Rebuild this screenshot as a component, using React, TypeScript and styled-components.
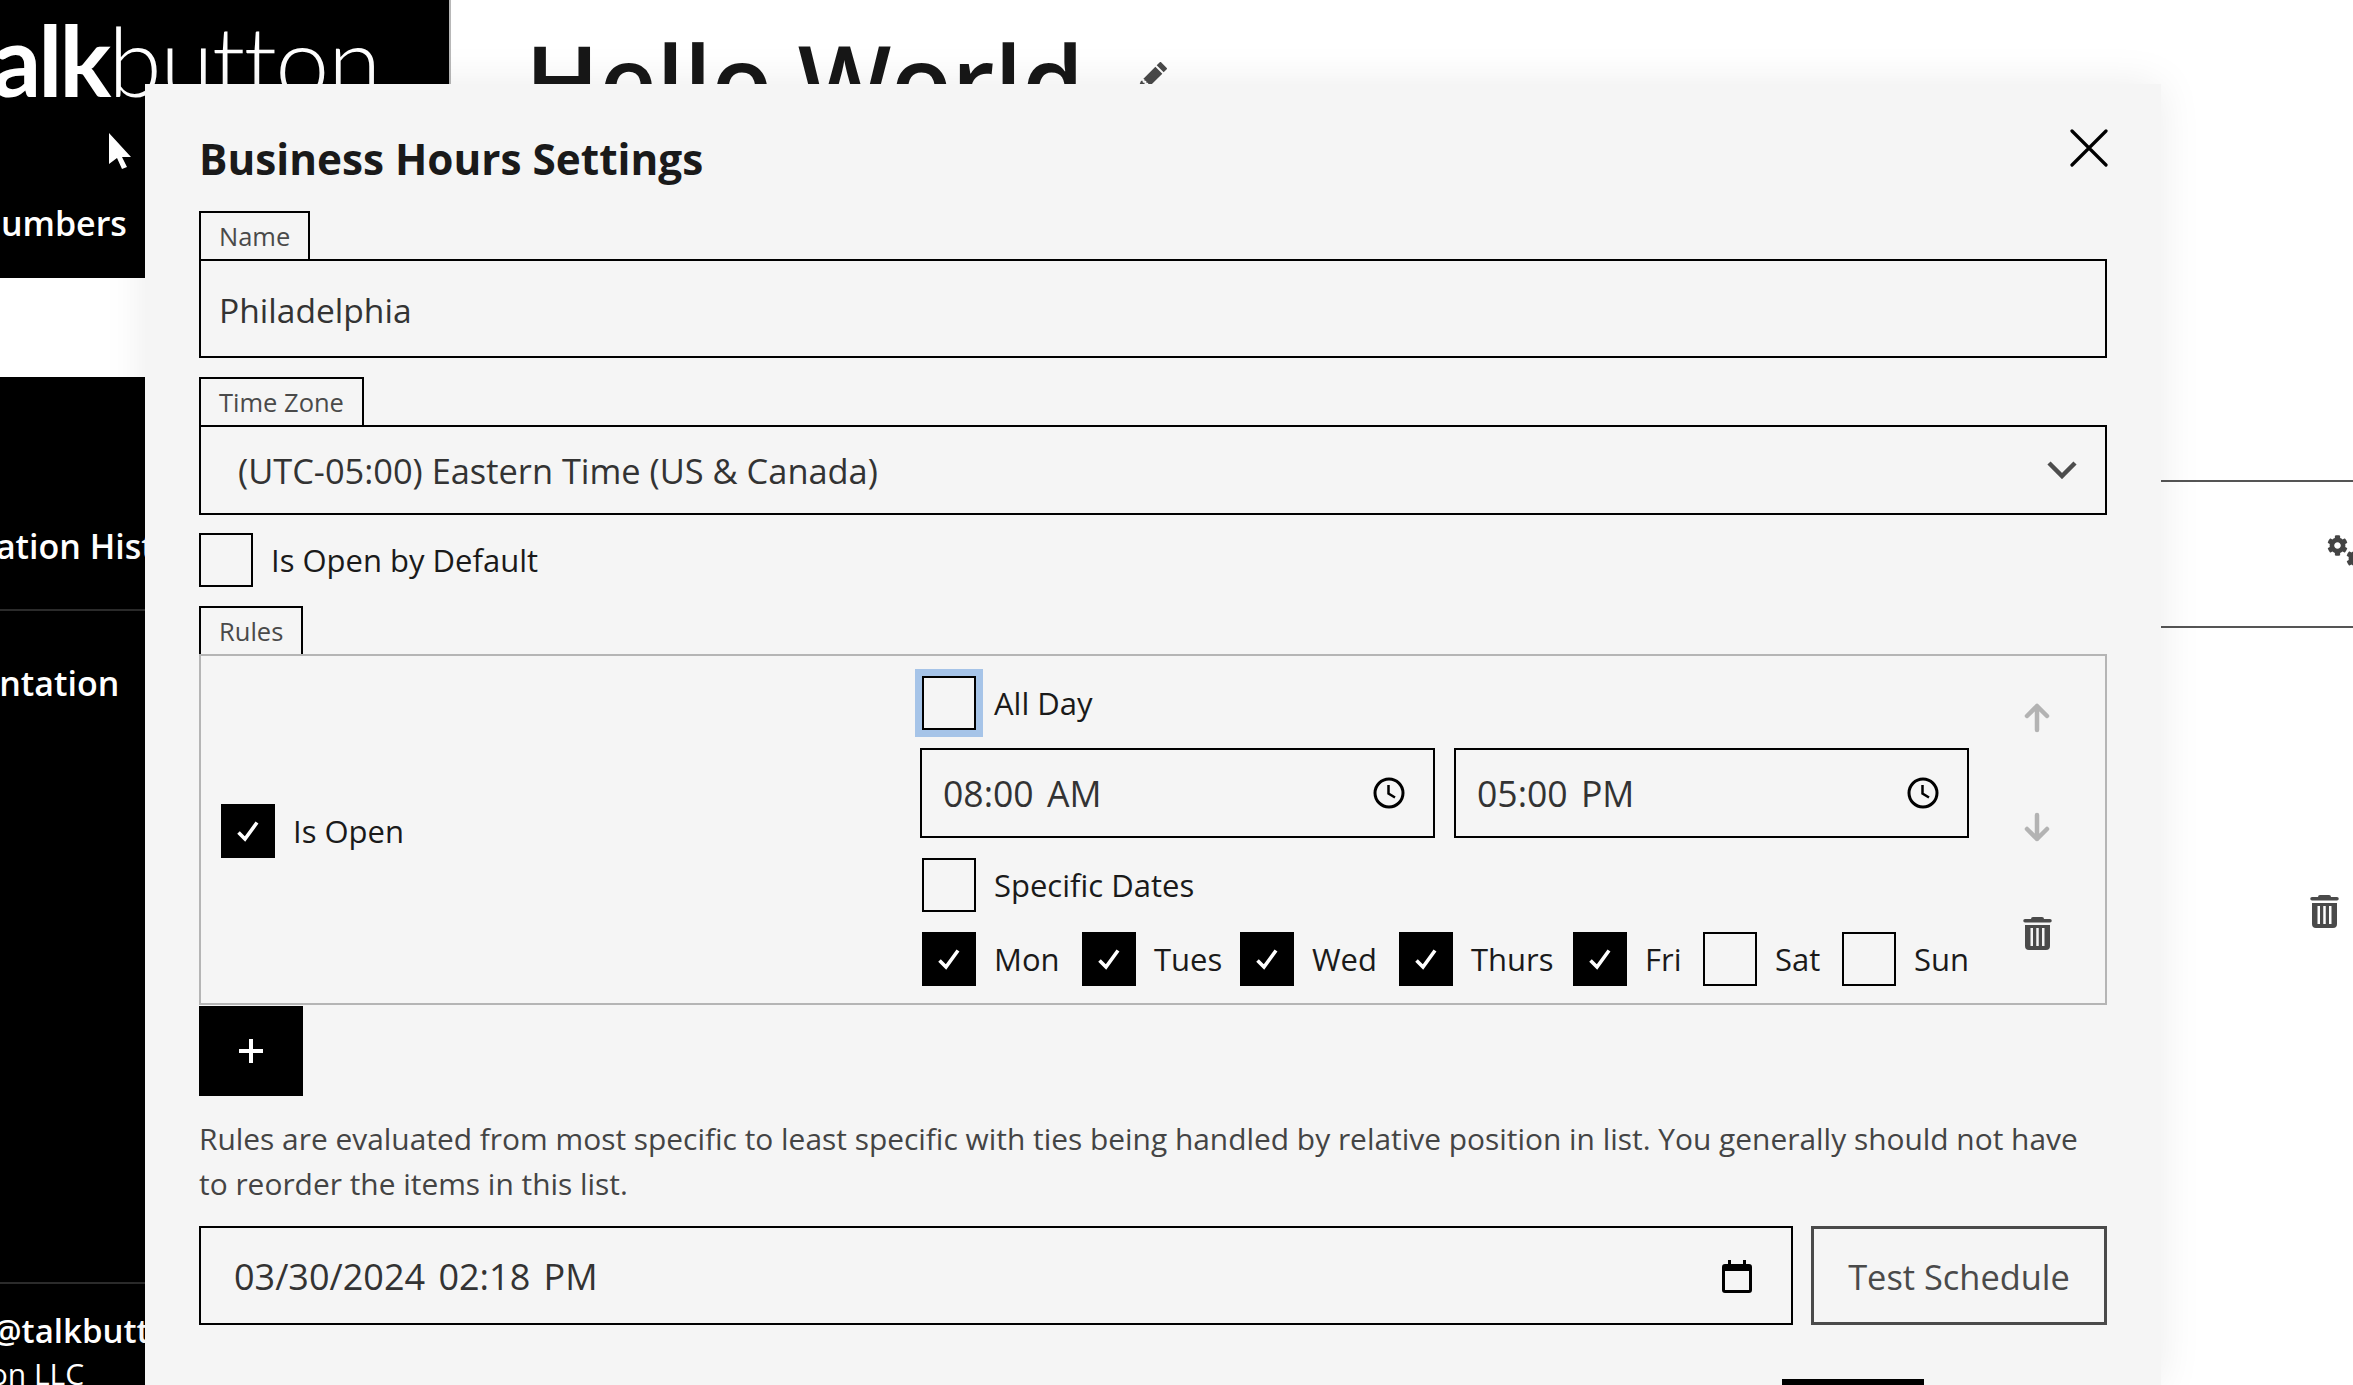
import styled, { createGlobalStyle } from 'styled-components';
import { BsPencilFill } from 'react-icons/bs';
import { FaCog } from 'react-icons/fa';

const FONT = '"Open Sans", "Noto Sans", "Liberation Sans", sans-serif';
const DAYS = [
  { name: 'Mon', checked: true, width: 160 },
  { name: 'Tues', checked: true, width: 158 },
  { name: 'Wed', checked: true, width: 159 },
  { name: 'Thurs', checked: true, width: 174 },
  { name: 'Fri', checked: true, width: 130 },
  { name: 'Sat', checked: false, width: 139 },
  { name: 'Sun', checked: false, width: 127 },
];

const GlobalStyle = createGlobalStyle`
  html, body {
    margin: 0;
    height: 100%;
    overflow: hidden;
    background: #fff;
  }
  * {
    box-sizing: border-box;
  }
`;

function CheckBox({ checked, focused }: { checked?: boolean; focused?: boolean }) {
  return (
    <Box $checked={checked} $focused={focused}>
      {checked && (
        <svg width="24" height="24" viewBox="0 0 24 24" fill="none">
          <path d="M2.5 13.5 L9 20 L21 3.5" stroke="#fff" strokeWidth="3.6" />
        </svg>
      )}
    </Box>
  );
}

function ClockIcon() {
  return (
    <svg width="32" height="32" viewBox="0 0 32 32" fill="none" stroke="#000">
      <circle cx="16" cy="16" r="14" strokeWidth="3" />
      <path d="M15.5 8 V16.5 L22 20.5" strokeWidth="2.5" />
    </svg>
  );
}

function CalendarIcon() {
  return (
    <svg width="30" height="33" viewBox="0 0 30 33">
      <path d="M6 0 h3 v4 h12 v-4 h3 v4 h3 a3 3 0 0 1 3 3 v23 a3 3 0 0 1 -3 3 h-24 a3 3 0 0 1 -3 -3 v-23 a3 3 0 0 1 3 -3 h3 z M3 11 v19 h24 v-19 z" fillRule="evenodd" fill="#000" />
    </svg>
  );
}

function TrashIcon() {
  return (
    <svg width="29" height="33" viewBox="0 0 29 33" fill="#4a4a4a">
      <path d="M10 0 h9 a2 2 0 0 1 2 2 h6 a1.5 1.5 0 0 1 0 3.5 h-25 a1.5 1.5 0 0 1 0 -3.5 h6 a2 2 0 0 1 2 -2 z" />
      <path
        d="M2 8 h25 v21 a4 4 0 0 1 -4 4 h-17 a4 4 0 0 1 -4 -4 z M7.5 11 v18 h2.5 v-18 z M13.25 11 v18 h2.5 v-18 z M19 11 v18 h2.5 v-18 z"
        fillRule="evenodd"
      />
    </svg>
  );
}

function ArrowIcon({ down }: { down?: boolean }) {
  return (
    <svg width="26" height="30" viewBox="0 0 26 30" fill="none" stroke="#b3b3b3" strokeWidth="4.5" strokeLinecap="round" strokeLinejoin="round">
      {down ? <path d="M13 3 V27 M3 17 L13 27 L23 17" /> : <path d="M13 27 V3 M3 13 L13 3 L23 13" />}
    </svg>
  );
}

export default function App() {
  return (
    <Page>
      <GlobalStyle />
      <Sidebar>
        <Logo>
          <LogoBold>talk</LogoBold>
          <LogoThin>button</LogoThin>
        </Logo>
        <NavItem $height={100} $shift={-139} $lift={10}>Phone Numbers</NavItem>
        <ActiveItem />
        <NavItem $height={120} $shift={0} />
        <NavItem $height={114} $shift={-137} $lift={14} $divider>Conversation History</NavItem>
        <NavItem $height={144} $shift={-137}>Documentation</NavItem>
        <SidebarFooter>
          <FooterHandle>@talkbutton</FooterHandle>
          <FooterCompany>Talkbutton LLC</FooterCompany>
        </SidebarFooter>
      </Sidebar>
      <Main>
        <TitleRow>
          <PageTitle>Hello World</PageTitle>
          <BsPencilFill size={30} color="#4a4a4a" />
        </TitleRow>
        <TableRow>
          <GearPair>
            <FaCog size={21} color="#444" />
            <SmallGear>
              <FaCog size={21} color="#444" />
            </SmallGear>
          </GearPair>
        </TableRow>
        <TrashRow>
          <TrashIcon />
        </TrashRow>
      </Main>

      <Pointer width="24" height="36" viewBox="0 0 24 36">
        <path d="M1 0 L23 24 L14 24 L19 34 L14 36 L9 25 L1 31 Z" fill="#fff" />
      </Pointer>

      <Modal>
        <ModalHeader>
          <ModalTitle>Business Hours Settings</ModalTitle>
          <CloseButton aria-label="Close">
            <svg width="38" height="38" viewBox="0 0 38 38" stroke="#000" strokeWidth="3.2" strokeLinecap="round">
              <path d="M2 2 L36 36 M36 2 L2 36" />
            </svg>
          </CloseButton>
        </ModalHeader>

        <FieldTab>Name</FieldTab>
        <TextField>Philadelphia</TextField>

        <FieldTab $top={19}>Time Zone</FieldTab>
        <SelectField>
          <span>(UTC-05:00) Eastern Time (US &amp; Canada)</span>
          <svg width="30" height="18" viewBox="0 0 30 18" fill="none" stroke="#4d4d4d" strokeWidth="4.5">
            <path d="M2 2 L15 15 L28 2" />
          </svg>
        </SelectField>

        <DefaultRow>
          <CheckBox />
          <CheckLabel>Is Open by Default</CheckLabel>
        </DefaultRow>

        <FieldTab $top={19}>Rules</FieldTab>
        <RulesBox>
          <IsOpenCol>
            <CheckBox checked />
            <CheckLabel>Is Open</CheckLabel>
          </IsOpenCol>
          <RuleCol>
            <RuleCheckRow>
              <CheckBox focused />
              <CheckLabel>All Day</CheckLabel>
            </RuleCheckRow>
            <TimeRow>
              <TimeField>
                <span>08:00 AM</span>
                <ClockIcon />
              </TimeField>
              <TimeField>
                <span>05:00 PM</span>
                <ClockIcon />
              </TimeField>
            </TimeRow>
            <RuleCheckRow $top={20}>
              <CheckBox />
              <CheckLabel>Specific Dates</CheckLabel>
            </RuleCheckRow>
            <DaysRow>
              {DAYS.map((day) => (
                <DayCell key={day.name} $width={day.width}>
                  <CheckBox checked={day.checked} />
                  <CheckLabel>{day.name}</CheckLabel>
                </DayCell>
              ))}
            </DaysRow>
          </RuleCol>
          <ActionCol>
            <ArrowIcon />
            <ArrowIcon down />
            <TrashSlot>
              <TrashIcon />
            </TrashSlot>
          </ActionCol>
        </RulesBox>

        <AddButton aria-label="Add rule">
          <svg width="26" height="26" viewBox="0 0 26 26" stroke="#fff" strokeWidth="4">
            <path d="M13 1 V25 M1 13 H25" />
          </svg>
        </AddButton>

        <HelpText>
          Rules are evaluated from most specific to least specific with ties being handled by relative position in list. You generally should not have to reorder the items in this list.
        </HelpText>

        <TestRow>
          <DateField>
            <span>03/30/2024 02:18 PM</span>
            <CalendarIcon />
          </DateField>
          <TestButton>Test Schedule</TestButton>
        </TestRow>

        <ModalFooter>
          <SaveButton>Save</SaveButton>
        </ModalFooter>
      </Modal>
    </Page>
  );
}

const Page = styled.div`
  position: relative;
  display: flex;
  width: 100%;
  height: 100vh;
  overflow: hidden;
  font-family: ${FONT};
  color: #1a1a1a;
`;

const Sidebar = styled.aside`
  display: flex;
  flex-direction: column;
  flex: 0 0 451px;
  height: 100%;
  overflow: hidden;
  background: #000;
  border-right: 2px solid #b8b8b8;
  color: #fff;
`;

const Logo = styled.div`
  display: flex;
  align-items: baseline;
  flex: 0 0 178px;
  margin-left: -41px;
  font-family: Lato, ${FONT};
  font-size: 97px;
  line-height: 120px;
  white-space: nowrap;
`;

const LogoBold = styled.span`
  font-weight: 700;
  letter-spacing: -3px;
`;

const LogoThin = styled.span`
  font-weight: 300;
  letter-spacing: -1.5px;
`;

const NavItem = styled.div<{ $height: number; $shift: number; $lift?: number; $divider?: boolean }>`
  display: flex;
  align-items: center;
  flex: 0 0 ${(p) => p.$height}px;
  margin-left: ${(p) => p.$shift}px;
  padding-bottom: ${(p) => p.$lift ?? 0}px;
  border-bottom: ${(p) => (p.$divider ? '2px solid #2b2b2b' : 'none')};
  font-size: 34px;
  font-weight: 600;
  white-space: nowrap;
`;

const ActiveItem = styled.div`
  flex: 0 0 99px;
  background: #fff;
`;

const SidebarFooter = styled.div`
  display: flex;
  flex-direction: column;
  margin-top: auto;
  height: 103px;
  border-top: 2px solid #2b2b2b;
  white-space: nowrap;
`;

const FooterHandle = styled.div`
  margin: 25px 0 0 -8px;
  font-size: 33px;
  font-weight: 600;
  line-height: 44px;
`;

const FooterCompany = styled.div`
  margin-left: -125px;
  font-size: 30px;
  line-height: 42px;
`;

const Main = styled.main`
  display: flex;
  flex-direction: column;
  flex: 1;
  min-width: 0;
`;

const TitleRow = styled.div`
  display: flex;
  align-items: flex-start;
  gap: 53px;
  height: 480px;
  padding-left: 74px;
  svg {
    margin-top: 62px;
  }
`;

const PageTitle = styled.h1`
  margin: 15px 0 0;
  font-size: 99px;
  font-weight: 600;
  line-height: 130px;
  color: #171717;
`;

const TableRow = styled.div`
  display: flex;
  justify-content: flex-end;
  align-items: center;
  height: 148px;
  border-top: 2px solid #555;
  border-bottom: 2px solid #555;
  overflow: hidden;
`;

const GearPair = styled.div`
  display: flex;
  flex: 0 0 40px;
  margin-right: -14px;
`;

const SmallGear = styled.div`
  margin-top: 13px;
  margin-left: -2px;
`;

const TrashRow = styled.div`
  display: flex;
  justify-content: flex-end;
  padding: 267px 14px 0 0;
`;

const Pointer = styled.svg`
  position: absolute;
  left: 108px;
  top: 133px;
`;

const Modal = styled.section`
  position: absolute;
  left: 145px;
  top: 84px;
  right: 192px;
  bottom: 0;
  padding: 0 54px;
  overflow: hidden;
  background: #f5f5f5;
  box-shadow: 0 0 40px rgba(0, 0, 0, 0.08);
`;

const ModalHeader = styled.header`
  display: flex;
  justify-content: space-between;
  align-items: flex-start;
  height: 127px;
  padding-top: 45px;
`;

const ModalTitle = styled.h2`
  margin: 0;
  font-size: 42.3px;
  font-weight: 700;
  line-height: 60px;
  color: #1a1a1a;
`;

const CloseButton = styled.button`
  display: flex;
  margin-right: -1px;
  padding: 0;
  border: none;
  background: none;
`;

const FieldTab = styled.div<{ $top?: number }>`
  display: table;
  height: 48px;
  margin-top: ${(p) => p.$top ?? 0}px;
  padding: 0 18px;
  border: 2px solid #000;
  border-bottom: none;
  font-size: 25.5px;
  line-height: 46px;
  color: #4a4a4a;
`;

const TextField = styled.div`
  display: flex;
  align-items: center;
  height: 99px;
  padding: 2px 18px 0;
  border: 2px solid #000;
  font-size: 33.6px;
  color: #333;
`;

const SelectField = styled(TextField)`
  justify-content: space-between;
  height: 90px;
  padding: 0 28px 0 37px;
  font-size: 34.4px;
`;

const DefaultRow = styled.div`
  display: flex;
  align-items: center;
  gap: 18px;
  margin-top: 18px;
`;

const Box = styled.span<{ $checked?: boolean; $focused?: boolean }>`
  display: flex;
  align-items: center;
  justify-content: center;
  flex: 0 0 54px;
  height: 54px;
  border: 2px solid #000;
  background: ${(p) => (p.$checked ? '#000' : 'transparent')};
  box-shadow: ${(p) => (p.$focused ? '0 0 0 7px #a6c4e8' : 'none')};
`;

const CheckLabel = styled.span`
  font-size: 31px;
  font-weight: 500;
  line-height: 44px;
  white-space: nowrap;
  color: #1a1a1a;
`;

const RulesBox = styled.div`
  display: grid;
  grid-template-columns: 719px 1049px 136px;
  height: 351px;
  border: 2px solid #b5b5b5;
`;

const IsOpenCol = styled.div`
  display: flex;
  align-items: center;
  gap: 18px;
  padding: 3px 0 0 20px;
`;

const RuleCol = styled.div`
  display: flex;
  flex-direction: column;
  padding-top: 20px;
`;

const RuleCheckRow = styled.div<{ $top?: number }>`
  display: flex;
  align-items: center;
  gap: 18px;
  margin-top: ${(p) => p.$top ?? 0}px;
  margin-left: 2px;
`;

const TimeRow = styled.div`
  display: grid;
  grid-template-columns: 515px 515px;
  gap: 19px;
  margin-top: 18px;
`;

const TimeField = styled.div`
  display: flex;
  justify-content: space-between;
  align-items: center;
  height: 90px;
  padding: 0 28px 1px 21px;
  border: 2px solid #000;
  font-size: 35.6px;
  word-spacing: 4px;
  color: #333;
`;

const DaysRow = styled.div`
  display: flex;
  margin-top: 20px;
  margin-left: 2px;
`;

const DayCell = styled.div<{ $width: number }>`
  display: flex;
  align-items: center;
  gap: 18px;
  flex: 0 0 ${(p) => p.$width}px;
`;

const ActionCol = styled.div`
  display: flex;
  flex-direction: column;
  align-items: center;
  gap: 79px;
  padding-top: 47px;
`;

const TrashSlot = styled.div`
  display: flex;
  margin-top: -4px;
`;

const AddButton = styled.button`
  display: flex;
  align-items: center;
  justify-content: center;
  width: 104px;
  height: 90px;
  margin-top: 1px;
  padding: 0;
  border: none;
  background: #000;
`;

const HelpText = styled.p`
  margin: 20px 0;
  font-size: 29.9px;
  line-height: 45px;
  color: #444;
`;

const TestRow = styled.div`
  display: flex;
  gap: 18px;
`;

const DateField = styled(TextField)`
  flex: 1;
  justify-content: space-between;
  padding: 2px 39px 0 33px;
  font-size: 36px;
  word-spacing: 4px;
`;

const TestButton = styled.button`
  flex: 0 0 296px;
  height: 99px;
  padding: 2px 0 0;
  border: 3px solid #4a4a4a;
  background: transparent;
  font-family: ${FONT};
  font-size: 34.4px;
  font-weight: 500;
  color: #4a4a4a;
`;

const ModalFooter = styled.footer`
  display: flex;
  justify-content: flex-end;
  margin-top: 54px;
  padding-right: 183px;
`;

const SaveButton = styled.button`
  width: 142px;
  height: 90px;
  padding: 0;
  border: none;
  background: #000;
  color: #fff;
  font-family: ${FONT};
  font-size: 34px;
`;
